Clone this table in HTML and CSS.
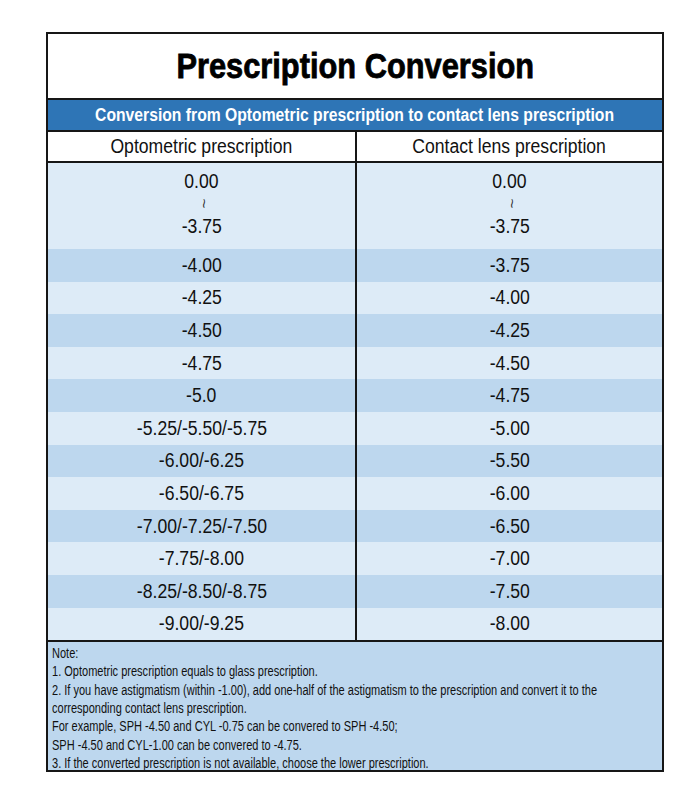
FILE: index.html
```html
<!DOCTYPE html>
<html lang="en">
<head>
<meta charset="utf-8">
<title>Prescription Conversion</title>
<link rel="stylesheet" href="styles.css">
</head>
<body>
<div class="sheet">
  <div class="title"><span class="sq">Prescription Conversion</span></div>
  <div class="band"><span class="sq">Conversion from Optometric prescription to contact lens prescription</span></div>
  <div class="table">
    <div class="head left"><span class="sq">Optometric prescription</span></div>
    <div class="head"><span class="sq">Contact lens prescription</span></div>

    <div class="cell left light range"><span class="sq">0.00</span><span class="tilde">~</span><span class="sq">-3.75</span></div>
    <div class="cell light range"><span class="sq">0.00</span><span class="tilde">~</span><span class="sq">-3.75</span></div>

    <div class="cell left dark"><span class="sq">-4.00</span></div><div class="cell dark"><span class="sq">-3.75</span></div>
    <div class="cell left light"><span class="sq">-4.25</span></div><div class="cell light"><span class="sq">-4.00</span></div>
    <div class="cell left dark"><span class="sq">-4.50</span></div><div class="cell dark"><span class="sq">-4.25</span></div>
    <div class="cell left light"><span class="sq">-4.75</span></div><div class="cell light"><span class="sq">-4.50</span></div>
    <div class="cell left dark"><span class="sq">-5.0</span></div><div class="cell dark"><span class="sq">-4.75</span></div>
    <div class="cell left light"><span class="sq">-5.25/-5.50/-5.75</span></div><div class="cell light"><span class="sq">-5.00</span></div>
    <div class="cell left dark"><span class="sq">-6.00/-6.25</span></div><div class="cell dark"><span class="sq">-5.50</span></div>
    <div class="cell left light"><span class="sq">-6.50/-6.75</span></div><div class="cell light"><span class="sq">-6.00</span></div>
    <div class="cell left dark"><span class="sq">-7.00/-7.25/-7.50</span></div><div class="cell dark"><span class="sq">-6.50</span></div>
    <div class="cell left light"><span class="sq">-7.75/-8.00</span></div><div class="cell light"><span class="sq">-7.00</span></div>
    <div class="cell left dark"><span class="sq">-8.25/-8.50/-8.75</span></div><div class="cell dark"><span class="sq">-7.50</span></div>
    <div class="cell left light"><span class="sq">-9.00/-9.25</span></div><div class="cell light"><span class="sq">-8.00</span></div>
  </div>
  <div class="notes">
    <div class="notes-text">
      <p>Note:</p>
      <p>1. Optometric prescription equals to glass prescription.</p>
      <p>2. If you have astigmatism (within -1.00), add one-half of the astigmatism to the prescription and convert it to the<br>corresponding contact lens prescription.</p>
      <p>For example, SPH -4.50 and CYL -0.75 can be convered to SPH -4.50;</p>
      <p>SPH -4.50 and CYL-1.00 can be convered to -4.75.</p>
      <p>3. If the converted prescription is not available, choose the lower prescription.</p>
    </div>
  </div>
</div>
</body>
</html>
```
FILE: styles.css
```css
html, body {
  margin: 0;
  padding: 0;
  background: #ffffff;
}
body {
  font-family: "Liberation Sans", Arial, sans-serif;
  color: #111111;
}
.sq {
  display: inline-block;
  white-space: nowrap;
  transform: scaleX(0.88);
}
.sheet {
  box-sizing: border-box;
  width: 618px;
  margin: 32px 0 0 46px;
  border: 2px solid #161616;
}
.title {
  height: 64px;
  display: flex;
  align-items: center;
  justify-content: center;
  font-weight: bold;
  font-size: 35px;
  color: #000;
  -webkit-text-stroke: 0.8px #000;
}
.band {
  box-sizing: border-box;
  height: 32px;
  border-top: 2px solid #161616;
  background: #2e75b6;
  color: #ffffff;
  font-weight: bold;
  font-size: 18px;
  display: flex;
  align-items: center;
  justify-content: center;
}
.band .sq {
  transform: scaleX(0.872);
}
.table {
  display: grid;
  grid-template-columns: 309px 1fr;
}
.head {
  box-sizing: border-box;
  height: 33px;
  border-top: 2px solid #161616;
  border-bottom: 2px solid #161616;
  font-size: 20px;
  display: flex;
  align-items: center;
  justify-content: center;
  background: #fff;
}
.left {
  border-right: 2px solid #161616;
}
.cell {
  box-sizing: border-box;
  height: 32.6px;
  font-size: 20px;
  display: flex;
  align-items: center;
  justify-content: center;
}
.cell.range {
  height: 86px;
  flex-direction: column;
  justify-content: flex-start;
  padding-top: 6px;
  line-height: 24px;
}
.tilde {
  display: block;
  height: 21px;
  line-height: 14px;
  font-size: 17px;
  color: #2a2a2a;
  transform: rotate(90deg) translateX(1px) scaleY(0.8);
  transform-origin: 50% 45%;
}
.light {
  background: #ddebf7;
}
.dark {
  background: #bdd7ee;
}
.notes {
  border-top: 2px solid #161616;
  background: #bdd7ee;
  padding: 2px 4px 0 4px;
  height: 130px;
  box-sizing: border-box;
  overflow: hidden;
}
.notes-text {
  font-size: 14px;
  line-height: 18.3px;
  white-space: nowrap;
  transform: scaleX(0.787);
  transform-origin: 0 0;
}
.notes p {
  margin: 0;
}
```
